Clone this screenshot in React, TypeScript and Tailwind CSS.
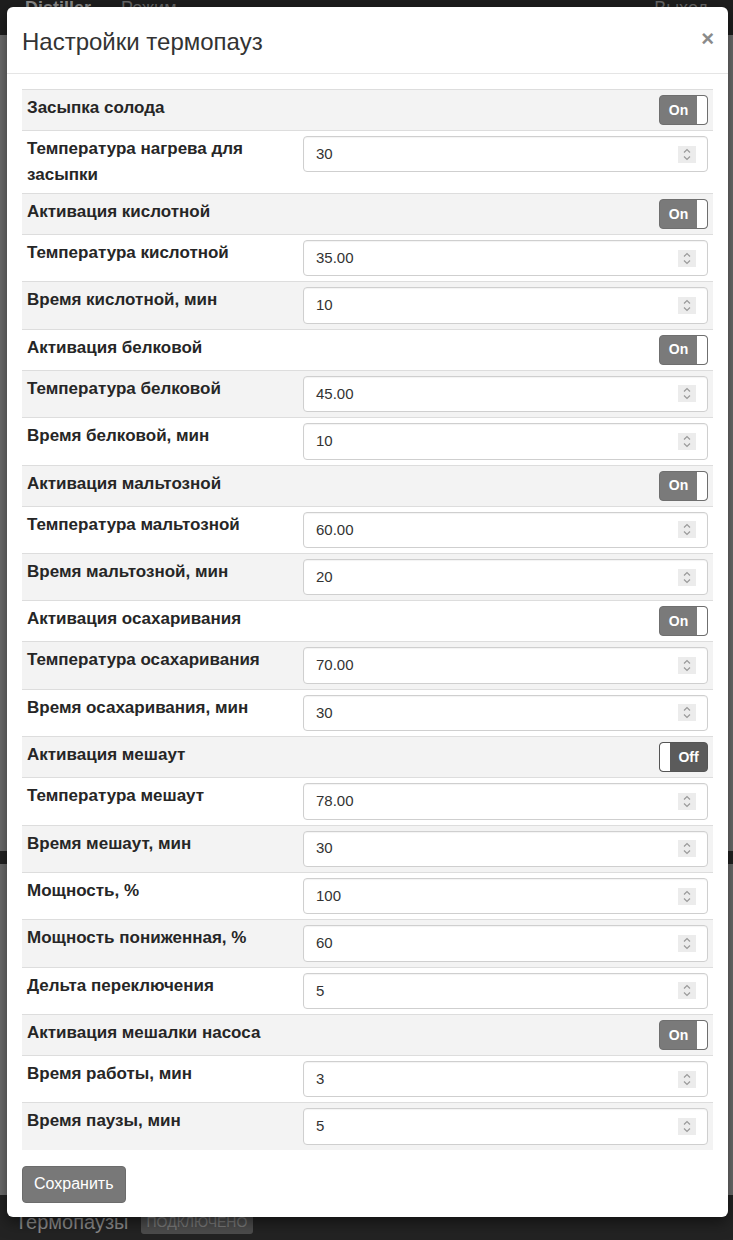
type Row =
  | { kind: "toggle"; label: string; on: boolean }
  | { kind: "input"; label: string; value: string };

const rows: Row[] = [
  { kind: "toggle", label: "Засыпка солода", on: true },
  { kind: "input", label: "Температура нагрева для засыпки", value: "30" },
  { kind: "toggle", label: "Активация кислотной", on: true },
  { kind: "input", label: "Температура кислотной", value: "35.00" },
  { kind: "input", label: "Время кислотной, мин", value: "10" },
  { kind: "toggle", label: "Активация белковой", on: true },
  { kind: "input", label: "Температура белковой", value: "45.00" },
  { kind: "input", label: "Время белковой, мин", value: "10" },
  { kind: "toggle", label: "Активация мальтозной", on: true },
  { kind: "input", label: "Температура мальтозной", value: "60.00" },
  { kind: "input", label: "Время мальтозной, мин", value: "20" },
  { kind: "toggle", label: "Активация осахаривания", on: true },
  { kind: "input", label: "Температура осахаривания", value: "70.00" },
  { kind: "input", label: "Время осахаривания, мин", value: "30" },
  { kind: "toggle", label: "Активация мешаут", on: false },
  { kind: "input", label: "Температура мешаут", value: "78.00" },
  { kind: "input", label: "Время мешаут, мин", value: "30" },
  { kind: "input", label: "Мощность, %", value: "100" },
  { kind: "input", label: "Мощность пониженная, %", value: "60" },
  { kind: "input", label: "Дельта переключения", value: "5" },
  { kind: "toggle", label: "Активация мешалки насоса", on: true },
  { kind: "input", label: "Время работы, мин", value: "3" },
  { kind: "input", label: "Время паузы, мин", value: "5" },
];

const Toggle = ({ on }: { on: boolean }) => {
  if (on) {
    return (
      <div className="flex h-[30px] w-[49px] overflow-hidden rounded-[4px] border border-[#6f6f6f] bg-[#7a7a7a]">
        <span className="flex flex-1 items-center justify-center text-[14px] font-bold text-white">
          On
        </span>
        <span className="w-[10px] rounded-r-[3px] bg-white" />
      </div>
    );
  }
  return (
    <div className="flex h-[30px] w-[49px] overflow-hidden rounded-[4px] border border-[#555] bg-[#5b5b5b]">
      <span className="w-[10px] rounded-l-[3px] bg-white" />
      <span className="flex flex-1 items-center justify-center text-[14px] font-bold text-white">
        Off
      </span>
    </div>
  );
};

const Spinner = () => (
  <div className="flex h-[17px] w-[18px] items-center justify-center bg-[#ececec]">
    <svg width="10" height="13" viewBox="0 0 10 13" fill="none">
      <path d="M2 4.5 L5 1.5 L8 4.5" stroke="#9a9a9a" strokeWidth="1.2" />
      <path d="M2 8.5 L5 11.5 L8 8.5" stroke="#9a9a9a" strokeWidth="1.2" />
    </svg>
  </div>
);

const NumberField = ({ value }: { value: string }) => (
  <div className="flex h-[36.4px] items-center justify-between rounded-[4px] border border-[#cfcfcf] bg-white pl-[12px] pr-[11px] shadow-[inset_0_1px_1px_rgba(0,0,0,0.05)]">
    <span className="text-[15px] text-[#333]">{value}</span>
    <Spinner />
  </div>
);

export default function App() {
  return (
    <div
      className="relative h-[1240px] w-full overflow-hidden bg-[#6e6e6e]"
      style={{ fontFamily: '"Liberation Sans", Arial, sans-serif' }}
    >
      {/* page behind the modal */}
      <div className="absolute inset-x-0 top-0 flex h-[35px] items-start justify-between bg-[#1e1e1e] px-[25px]">
        <div className="-mt-[4px] flex gap-[30px] text-[18px] leading-[24px]">
          <span className="font-bold text-[#8a8a8a]">Distiller</span>
          <span className="text-[#666]">Режим</span>
        </div>
        <span className="-mt-[4px] text-[18px] leading-[24px] text-[#666]">Выход</span>
      </div>
      <div className="absolute inset-x-0 top-[851px] h-[13px] bg-[#232323]" />
      <div className="absolute inset-x-0 bottom-0 top-[1195px] bg-[#232323]">
        <div className="mt-[15px] flex items-end gap-[12px] pl-[15px]">
          <span className="text-[20px] leading-[24px] text-[#8c8c8c]">Термопаузы</span>
          <span className="rounded-[3px] bg-[#4d4d4d] px-[6px] text-[14px] leading-[24px] text-[#7a7a7a]">
            ПОДКЛЮЧЕНО
          </span>
        </div>
      </div>

      {/* modal */}
      <div className="relative ml-[7px] mr-[5px] mt-[7px] rounded-[6px] bg-white shadow-[0_5px_15px_rgba(0,0,0,0.5)]">
        <div className="flex items-center justify-between border-b border-[#e5e5e5] pl-[15px] pr-[14px] pb-[14px] pt-[17px]">
          <h4 className="text-[24px] leading-[35px] text-[#333]">Настройки термопауз</h4>
          <span className="-mt-[6px] text-[22px] font-bold leading-[20px] text-[#8a8a8a]">×</span>
        </div>

        <div className="px-[15px] pb-[14px] pt-[15px]">
          <div>
            {rows.map((row, i) => (
              <div
                key={row.label}
                className={`flex border-t border-[#dddddd] ${i % 2 === 0 ? "bg-[#f3f3f3]" : "bg-white"}`}
              >
                <div className="w-[276px] px-[5px] py-[5px] text-[17px] font-bold leading-[26px] text-[#262626]">
                  {row.label}
                </div>
                <div className="flex flex-1 justify-end px-[5px] py-[5px]">
                  {row.kind === "toggle" ? (
                    <Toggle on={row.on} />
                  ) : (
                    <div className="w-full">
                      <NumberField value={row.value} />
                    </div>
                  )}
                </div>
              </div>
            ))}
          </div>

          <button className="mt-[16px] h-[37px] rounded-[4px] border border-[#6c6c6c] bg-[#787878] px-[11px] text-[16px] text-white">
            Сохранить
          </button>
        </div>
      </div>
    </div>
  );
}
